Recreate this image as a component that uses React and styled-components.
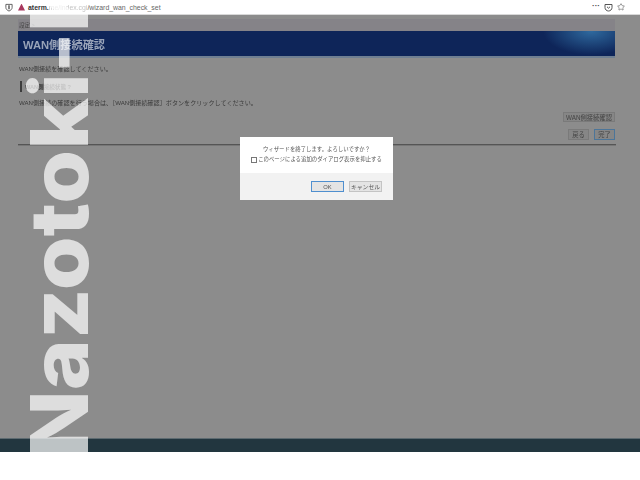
import React from 'react'
import styled, { createGlobalStyle } from 'styled-components'
import { Star } from 'lucide-react'

const GlobalStyle = createGlobalStyle`
  html, body {
    margin: 0;
    padding: 0;
    background: #fff;
    overflow: hidden;
  }
  body {
    font-family: "Liberation Sans", "Noto Sans CJK JP", sans-serif;
  }
`

const Screen = styled.div`
  position: relative;
  width: 640px;
  height: 480px;
  overflow: hidden;
  background: #fff;
`

const UrlBar = styled.div`
  height: 15px;
  box-sizing: border-box;
  padding: 0 15px 0 5px;
  display: flex;
  align-items: center;
  background: #fff;
  border-bottom: 1px solid #d8d8d8;
  font-size: 6.9px;
  color: #666;
`

const Favicon = styled.span`
  display: block;
  width: 7px;
  height: 7px;
  margin: 0 3px 0 5px;
  background: #a8385e;
  clip-path: polygon(50% 0, 100% 100%, 0 100%);
`

const Host = styled.span`
  color: #333;
  font-weight: bold;
`

const Blurred = styled.span`
  color: #c4c4c4;
  filter: blur(0.6px);
`

const BarIcons = styled.div`
  margin-left: auto;
  display: flex;
  align-items: center;
  gap: 4px;
  color: #444;
`

const Dots = styled.span`
  font-size: 8px;
  font-weight: bold;
  line-height: 8px;
  margin-top: -3px;
`

const Page = styled.div`
  height: 423px;
  box-sizing: border-box;
  padding: 4px 24px 0 18px;
  background: #8c8c8c;
  color: #3a3a3a;
  font-size: 6.1px;
  filter: blur(0.35px);
`

const Crumb = styled.div`
  height: 12px;
  margin-right: 1px;
  padding-left: 1px;
  display: flex;
  align-items: center;
  background: #858388;
  font-size: 5.5px;
  color: #444;
`

const TitleBand = styled.h1`
  margin: 0 1px 0 0;
  height: 25px;
  padding-left: 5px;
  display: flex;
  align-items: center;
  background:
    radial-gradient(ellipse 48px 24px at 96% 0, #2f6a9f 0, rgba(47, 106, 159, 0) 100%),
    #0e2559;
  border-bottom: 2px solid #6f7f92;
  color: #98a3b8;
  font-size: 11.2px;
  font-weight: bold;
`

const Paragraph = styled.p`
  margin: ${p => p.$top}px 0 0 1px;
  line-height: 8px;
`

const SectionHead = styled.h2`
  margin: 8px 0 0 2px;
  height: 11px;
  padding-left: 3px;
  display: flex;
  align-items: center;
  border-left: 2px solid #3c3c3c;
  font-size: 5.6px;
  font-weight: bold;
  color: #3a3a3a;
`

const ButtonRow = styled.div`
  display: flex;
  justify-content: flex-end;
  gap: 5px;
  margin-top: ${p => p.$top}px;
  padding-right: 1px;
`

const PageButton = styled.span`
  height: ${p => p.$tall ? 11 : 10}px;
  width: ${p => p.$w}px;
  box-sizing: border-box;
  display: flex;
  align-items: center;
  justify-content: center;
  background: #868686;
  border: 1px solid ${p => p.$active ? '#4c7599' : '#7a7a7a'};
  font-size: 6.3px;
  color: #444;
`

const Rule = styled.div`
  height: 1px;
  margin-top: 4px;
  background: #555;
  border-bottom: 1px solid #777;
`

const Footer = styled.div`
  height: 14px;
  background: #22363f;
  border-top: 1px solid #5d6a70;
  box-sizing: border-box;
`

const Dialog = styled.div`
  position: absolute;
  left: 240px;
  top: 137px;
  width: 153px;
  height: 63px;
  display: flex;
  flex-direction: column;
  background: #fff;
  font-size: 5.4px;
  color: #555;
  filter: blur(0.25px);
`

const DialogBody = styled.div`
  height: 36px;
  box-sizing: border-box;
  padding-top: 8px;
  display: flex;
  flex-direction: column;
  align-items: center;
  gap: 1px;
  line-height: 9px;
`

const CheckLine = styled.div`
  display: flex;
  align-items: center;
  gap: 1px;
`

const CheckBox = styled.span`
  width: 4px;
  height: 4px;
  border: 1px solid #777;
  background: #fff;
`

const DialogFooter = styled.div`
  flex: 1;
  display: flex;
  justify-content: flex-end;
  align-items: center;
  gap: 5px;
  padding-right: 11px;
  background: #f2f2f2;
`

const DialogButton = styled.span`
  width: ${p => p.$w}px;
  height: 11px;
  box-sizing: border-box;
  display: flex;
  align-items: center;
  justify-content: center;
  background: #e4e4e4;
  border: 1px solid ${p => p.$primary ? '#4f8fcf' : '#c4c4c4'};
  font-size: 5.8px;
`

const Watermark = styled.div`
  position: absolute;
  left: 59px;
  top: 457px;
  transform-origin: 0 0;
  transform: rotate(-90deg) scaleX(1.09);
  white-space: nowrap;
  font-family: Inter, "Liberation Sans", sans-serif;
  font-weight: 800;
  font-size: 80px;
  line-height: 0;
  color: rgba(255, 255, 255, 0.7);
`

function ShieldIcon() {
  return (
    <svg width="8" height="9" viewBox="0 0 9 10" fill="none" stroke="#555" strokeWidth="1">
      <path d="M1 1.500h7v3.500c0 2-1.600 3.200-3.500 4C2.600 8.200 1 7 1 5z" />
      <path d="M4.500 2.500v4.500" strokeWidth="1.600" />
    </svg>
  )
}

function PocketIcon() {
  return (
    <svg width="9" height="9" viewBox="0 0 9 9" fill="none" stroke="#555" strokeWidth="1">
      <path d="M1 1.500h7v3c0 2-1.600 3.500-3.500 3.500S1 6.500 1 4.500z" />
      <path d="M3 3.800l1.500 1.400L6 3.800" />
    </svg>
  )
}

export default function App() {
  return (
    <Screen>
      <GlobalStyle />
      <UrlBar>
        <ShieldIcon />
        <Favicon />
        <Host>aterm.</Host>
        <Blurred>me/</Blurred>
        <Blurred>index.cgi</Blurred>
        <span>/wizard_wan_check_set</span>
        <BarIcons>
          <Dots>···</Dots>
          <PocketIcon />
          <Star size={8} strokeWidth={1.6} />
        </BarIcons>
      </UrlBar>
      <Page>
        <Crumb>設定 &gt;</Crumb>
        <TitleBand>WAN側接続確認</TitleBand>
        <Paragraph $top={7}>WAN側接続を確認してください。</Paragraph>
        <SectionHead>WAN側接続状態 ?</SectionHead>
        <Paragraph $top={7}>WAN側接続の確認を行う場合は、［WAN側接続確認］ボタンをクリックしてください。</Paragraph>
        <ButtonRow $top={5}>
          <PageButton $w={52}>WAN側接続確認</PageButton>
        </ButtonRow>
        <ButtonRow $top={7}>
          <PageButton $w={21} $tall>戻る</PageButton>
          <PageButton $w={21} $tall $active>完了</PageButton>
        </ButtonRow>
        <Rule />
      </Page>
      <Footer />
      <Dialog>
        <DialogBody>
          <div>ウィザードを終了します。よろしいですか？</div>
          <CheckLine>
            <CheckBox />
            このページによる追加のダイアログ表示を抑止する
          </CheckLine>
        </DialogBody>
        <DialogFooter>
          <DialogButton $w={33} $primary>OK</DialogButton>
          <DialogButton $w={33}>キャンセル</DialogButton>
        </DialogFooter>
      </Dialog>
      <Watermark>Nazotoki-K</Watermark>
    </Screen>
  )
}
